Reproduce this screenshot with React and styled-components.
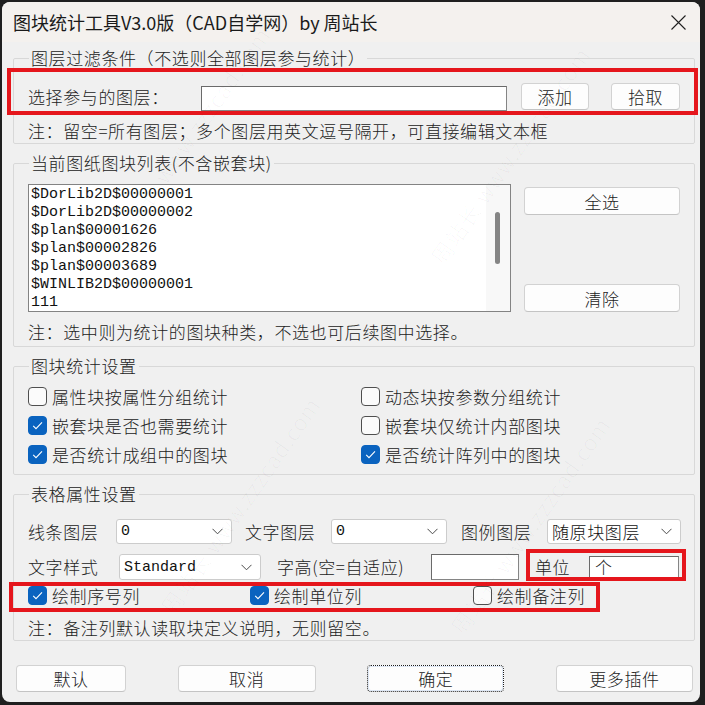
import React from "react";
import styled, { createGlobalStyle, css } from "styled-components";

const CJK = `"Noto Sans CJK SC", "Noto Sans", sans-serif`;
const MONO = `"Liberation Mono", "Noto Sans CJK SC", monospace`;

const GlobalStyle = createGlobalStyle`
  html, body { margin: 0; padding: 0; background: #1f1f1f; }
  body { width: 705px; height: 705px; overflow: hidden; }
  *, *::before, *::after { box-sizing: border-box; }
`;

const Desktop = styled.div`
  width: 705px;
  height: 705px;
  padding: 2px 5px 3px 2px;
  background: #1f1f1f;
`;

const Window = styled.div`
  position: relative;
  width: 698px;
  height: 700px;
  border-radius: 8px;
  overflow: hidden;
  background: #f0f0f0;
  color: #1e1e1e;
  font-family: ${CJK};
  font-size: 17px;
  font-weight: 300;
  letter-spacing: 0.6px;
`;

const TitleBar = styled.div`
  display: flex;
  align-items: center;
  height: 40px;
  padding: 0 14px 0 11px;
  background: #f4f1ee;
`;

const Title = styled.div`
  font-size: 18px;
  font-weight: 400;
  letter-spacing: 0;
  line-height: 40px;
  color: #1a1a1a;
`;

const CloseButton = styled.div`
  display: flex;
  margin-left: auto;
  width: 15px;
  height: 15px;
`;

const Body = styled.div`
  padding: 0 5px 0 11px;
`;

const Group = styled.fieldset`
  position: relative;
  min-width: 0;
  margin: ${(p) => p.$mt}px 0 0 0;
  padding: 0 14px ${(p) => p.$pb}px 14px;
  border: 1px solid #d8d8d8;
  border-radius: 2px;
`;

const Legend = styled.legend`
  margin-left: 1px;
  padding: 0 2px;
  line-height: 20px;
  color: #222;
`;

const Note = styled.div`
  margin-top: ${(p) => p.$mt}px;
  line-height: 20px;
  color: #222;
  white-space: nowrap;
`;

const Highlight = styled.div`
  position: absolute;
  top: ${(p) => p.$t}px;
  left: ${(p) => p.$l}px;
  right: ${(p) => p.$r}px;
  bottom: ${(p) => p.$b}px;
  border: 4px solid #e5161c;
  pointer-events: none;
`;

const FilterRow = styled.div`
  position: relative;
  display: flex;
  align-items: flex-start;
  height: 27px;
  margin-top: 15px;
`;

const FieldLabel = styled.div`
  flex: none;
  width: ${(p) => p.$w}px;
  margin-left: ${(p) => p.$ml || 0}px;
  line-height: ${(p) => p.$lh || 26}px;
  white-space: nowrap;
  color: #222;
`;

const TextBox = styled.div`
  flex: none;
  width: ${(p) => p.$w}px;
  height: ${(p) => p.$h}px;
  margin-top: ${(p) => p.$mt || 0}px;
  padding-left: 5px;
  background: #fff;
  border: 1px solid #858585;
  border-top-color: #6a6a6a;
  border-left-color: #6a6a6a;
  line-height: ${(p) => p.$h - 2}px;
`;

const Button = styled.div`
  flex: none;
  display: flex;
  align-items: center;
  justify-content: center;
  width: ${(p) => p.$w}px;
  height: ${(p) => p.$h || 28}px;
  margin-left: ${(p) => p.$ml || 0}px;
  background: #fdfdfd;
  border: 1px solid #d2d2d2;
  border-bottom-color: #c4c4c4;
  border-radius: 4px;
  color: #222;
  ${(p) =>
    p.$focused &&
    css`
      border: 1px dotted #1c1c1c;
      box-shadow: inset 0 0 0 1px #dfe8f5;
    `}
`;

const ListRow = styled.div`
  display: flex;
  margin-top: 11px;
`;

const ListBox = styled.div`
  position: relative;
  flex: none;
  width: 483px;
  height: 128px;
  padding: 1px 0 0 2px;
  background: #fff;
  border: 1px solid #838383;
  font-family: ${MONO};
  font-size: 15px;
  font-weight: 400;
  letter-spacing: 0;
  line-height: 18px;
  color: #111;
  overflow: hidden;
`;

const ListItem = styled.div`
  white-space: nowrap;
`;

const ScrollTrack = styled.div`
  position: absolute;
  top: 0;
  right: 0;
  bottom: 0;
  width: 24px;
  background: #f8f8f8;
`;

const ScrollThumb = styled.div`
  position: absolute;
  top: 27px;
  right: 10px;
  width: 5px;
  height: 52px;
  border-radius: 3px;
  background: #858585;
`;

const SideButtons = styled.div`
  display: flex;
  flex-direction: column;
  justify-content: space-between;
  width: 156px;
  height: 128px;
  margin-left: 13px;
  padding-top: 3px;
`;

const CheckGrid = styled.div`
  position: relative;
  display: grid;
  grid-template-columns: ${(p) => p.$cols};
  grid-auto-rows: ${(p) => p.$row}px;
  margin-top: ${(p) => p.$mt}px;
`;

const CheckItem = styled.label`
  display: flex;
  align-items: center;
  gap: 5px;
  white-space: nowrap;
  color: #222;
`;

const Box = styled.span`
  flex: none;
  display: flex;
  align-items: center;
  justify-content: center;
  width: 19px;
  height: 19px;
  border-radius: 4px;
  ${(p) =>
    p.$on
      ? css`
          background: #0a63bf;
          border: 1px solid #0a63bf;
        `
      : css`
          background: #fbfbfb;
          border: 1px solid #4f4f4f;
        `}
`;

const FormRow = styled.div`
  position: relative;
  display: flex;
  align-items: center;
  height: ${(p) => p.$h}px;
  margin-top: ${(p) => p.$mt}px;
`;

const Combo = styled.div`
  flex: none;
  display: flex;
  align-items: center;
  justify-content: space-between;
  width: ${(p) => p.$w}px;
  height: ${(p) => p.$h}px;
  padding: 0 8px 0 4px;
  background: #fff;
  border: 1px solid #cccccc;
  border-radius: 3px;
  font-family: ${(p) => (p.$mono ? MONO : CJK)};
  font-size: ${(p) => (p.$mono ? 15 : 17)}px;
  font-weight: ${(p) => (p.$mono ? 400 : 300)};
  letter-spacing: ${(p) => (p.$mono ? 0 : 0.6)}px;
  color: #111;
`;

const UnitGroup = styled.div`
  position: relative;
  display: flex;
  align-items: center;
  margin-left: 16px;
  height: 26px;
`;

const Footer = styled.div`
  display: flex;
  justify-content: space-between;
  margin: 24px 2px 0 3px;
`;

const Watermark = styled.div`
  position: absolute;
  top: ${(p) => p.$y}px;
  left: ${(p) => p.$x}px;
  transform: rotate(-55deg);
  transform-origin: left top;
  font-size: 22px;
  letter-spacing: 1px;
  color: rgba(0, 0, 0, 0.035);
  white-space: nowrap;
  pointer-events: none;
`;

const Chevron = () => (
  <svg width="11" height="7" viewBox="0 0 11 7">
    <polyline points="0.5,0.8 5.5,5.8 10.5,0.8" fill="none" stroke="#4a4a4a" strokeWidth="1" />
  </svg>
);

const CheckMark = () => (
  <svg width="13" height="13" viewBox="0 0 13 13">
    <polyline points="2.2,6.8 5,9.6 11,3.4" fill="none" stroke="#fff" strokeWidth="1.1" />
  </svg>
);

const Check = ({ on, children }) => (
  <CheckItem>
    <Box $on={on}>{on && <CheckMark />}</Box>
    {children}
  </CheckItem>
);

const blocks = [
  "$DorLib2D$00000001",
  "$DorLib2D$00000002",
  "$plan$00001626",
  "$plan$00002826",
  "$plan$00003689",
  "$WINLIB2D$00000001",
  "111",
];

const watermarks = [
  { x: 100, y: 230, t: "周站长  www.zzzcad.com" },
  { x: 420, y: 250, t: "周站长  www.zzzcad.com" },
  { x: 150, y: 600, t: "周站长  www.zzzcad.com" },
  { x: 440, y: 620, t: "周站长  www.zzzcad.com" },
];

export default function App() {
  return (
    <>
      <GlobalStyle />
      <Desktop>
        <Window>
          <TitleBar>
            <Title>图块统计工具V3.0版（CAD自学网）by 周站长</Title>
            <CloseButton>
              <svg width="15" height="15" viewBox="0 0 15 15">
                <path d="M0.5 0.5 L14.5 14.5 M14.5 0.5 L0.5 14.5" stroke="#202020" strokeWidth="1.1" />
              </svg>
            </CloseButton>
          </TitleBar>

          <Body>
            <Group $mt={6} $pb={2}>
              <Legend>图层过滤条件（不选则全部图层参与统计）</Legend>
              <FilterRow>
                <FieldLabel $w={173} $lh={27}>选择参与的图层：</FieldLabel>
                <TextBox $w={306} $h={25} $mt={3} />
                <Button $w={68} $h={27} $ml={14}>添加</Button>
                <Button $w={69} $h={27} $ml={22}>拾取</Button>
                <Highlight $t={-15} $b={-5} $l={-21} $r={-18} />
              </FilterRow>
              <Note $mt={11}>注：留空=所有图层；多个图层用英文逗号隔开，可直接编辑文本框</Note>
            </Group>

            <Group $mt={9} $pb={4}>
              <Legend>当前图纸图块列表(不含嵌套块)</Legend>
              <ListRow>
                <ListBox>
                  <ScrollTrack />
                  {blocks.map((b) => (
                    <ListItem key={b}>{b}</ListItem>
                  ))}
                  <ScrollThumb />
                </ListBox>
                <SideButtons>
                  <Button $w={156} $h={28}>全选</Button>
                  <Button $w={156} $h={28}>清除</Button>
                </SideButtons>
              </ListRow>
              <Note $mt={10}>注：选中则为统计的图块种类，不选也可后续图中选择。</Note>
            </Group>

            <Group $mt={9} $pb={5}>
              <Legend>图块统计设置</Legend>
              <CheckGrid $cols="333px 1fr" $row={29} $mt={6}>
                <Check>属性块按属性分组统计</Check>
                <Check>动态块按参数分组统计</Check>
                <Check on>嵌套块是否也需要统计</Check>
                <Check>嵌套块仅统计内部图块</Check>
                <Check on>是否统计成组中的图块</Check>
                <Check on>是否统计阵列中的图块</Check>
              </CheckGrid>
            </Group>

            <Group $mt={9} $pb={2}>
              <Legend>表格属性设置</Legend>
              <FormRow $h={25} $mt={15}>
                <FieldLabel $w={88}>线条图层</FieldLabel>
                <Combo $w={116} $h={25} $mono>
                  <span>0</span>
                  <Chevron />
                </Combo>
                <FieldLabel $w={86} $ml={13}>文字图层</FieldLabel>
                <Combo $w={116} $h={25} $mono>
                  <span>0</span>
                  <Chevron />
                </Combo>
                <FieldLabel $w={86} $ml={14}>图例图层</FieldLabel>
                <Combo $w={134} $h={25}>
                  <span>随原块图层</span>
                  <Chevron />
                </Combo>
              </FormRow>

              <FormRow $h={26} $mt={10}>
                <FieldLabel $w={91}>文字样式</FieldLabel>
                <Combo $w={142} $h={26} $mono>
                  <span>Standard</span>
                  <Chevron />
                </Combo>
                <FieldLabel $w={154} $ml={16}>字高(空=自适应)</FieldLabel>
                <TextBox $w={88} $h={26} />
                <UnitGroup>
                  <FieldLabel $w={54}>单位</FieldLabel>
                  <TextBox $w={90} $h={22}>个</TextBox>
                  <Highlight $t={-5} $b={-1} $l={-9} $r={-7} />
                </UnitGroup>
              </FormRow>

              <CheckGrid $cols="222px 223px 1fr" $row={20} $mt={5}>
                <Check on>绘制序号列</Check>
                <Check on>绘制单位列</Check>
                <Check>绘制备注列</Check>
                <Highlight $t={-3} $b={-7} $l={-19} $r={80} />
              </CheckGrid>

              <Note $mt={13}>注：备注列默认读取块定义说明，无则留空。</Note>
            </Group>

            <Footer>
              <Button $w={110} $h={27}>默认</Button>
              <Button $w={138} $h={27}>取消</Button>
              <Button $w={137} $h={27} $focused>确定</Button>
              <Button $w={137} $h={27}>更多插件</Button>
            </Footer>
          </Body>

          {watermarks.map((w, i) => (
            <Watermark key={i} $x={w.x} $y={w.y}>{w.t}</Watermark>
          ))}
        </Window>
      </Desktop>
    </>
  );
}
